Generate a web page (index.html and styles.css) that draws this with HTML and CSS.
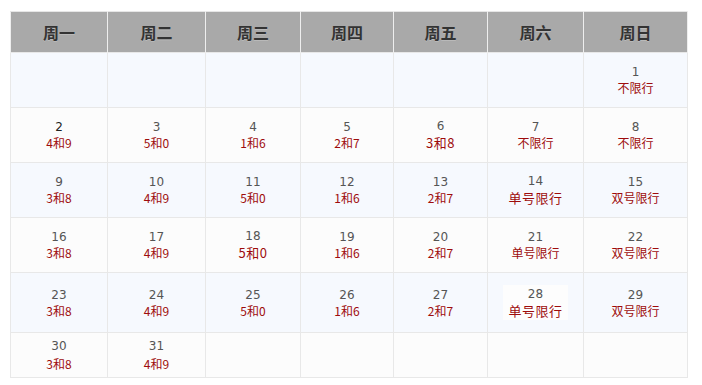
FILE: index.html
```html
<!DOCTYPE html>
<html lang="zh">
<head>
<meta charset="utf-8">
<link rel="stylesheet" href="styles.css">
</head>
<body>
<div class="wrap">
<table class="cal">
  <colgroup>
    <col class="c1"><col class="c2"><col class="c3"><col class="c4"><col class="c5"><col class="c6"><col class="c7">
  </colgroup>
  <thead>
    <tr><th>周一</th><th>周二</th><th>周三</th><th>周四</th><th>周五</th><th>周六</th><th>周日</th></tr>
  </thead>
  <tbody>
    <tr class="r1 blue">
      <td></td><td></td><td></td><td></td><td></td><td></td>
      <td><span class="n">1</span><span class="t">不限行</span></td>
    </tr>
    <tr class="r2 white">
      <td><span class="n dark">2</span><span class="t">4和9</span></td>
      <td><span class="n">3</span><span class="t">5和0</span></td>
      <td><span class="n">4</span><span class="t">1和6</span></td>
      <td><span class="n">5</span><span class="t">2和7</span></td>
      <td><span class="n">6</span><span class="t big">3和8</span></td>
      <td><span class="n">7</span><span class="t">不限行</span></td>
      <td><span class="n">8</span><span class="t">不限行</span></td>
    </tr>
    <tr class="r3 blue">
      <td><span class="n">9</span><span class="t">3和8</span></td>
      <td><span class="n">10</span><span class="t">4和9</span></td>
      <td><span class="n">11</span><span class="t">5和0</span></td>
      <td><span class="n">12</span><span class="t">1和6</span></td>
      <td><span class="n">13</span><span class="t">2和7</span></td>
      <td><span class="n">14</span><span class="t big">单号限行</span></td>
      <td><span class="n">15</span><span class="t">双号限行</span></td>
    </tr>
    <tr class="r4 white">
      <td><span class="n">16</span><span class="t">3和8</span></td>
      <td><span class="n">17</span><span class="t">4和9</span></td>
      <td><span class="n">18</span><span class="t big">5和0</span></td>
      <td><span class="n">19</span><span class="t">1和6</span></td>
      <td><span class="n">20</span><span class="t">2和7</span></td>
      <td><span class="n">21</span><span class="t">单号限行</span></td>
      <td><span class="n">22</span><span class="t">双号限行</span></td>
    </tr>
    <tr class="r5 blue">
      <td><span class="n">23</span><span class="t">3和8</span></td>
      <td><span class="n">24</span><span class="t">4和9</span></td>
      <td><span class="n">25</span><span class="t">5和0</span></td>
      <td><span class="n">26</span><span class="t">1和6</span></td>
      <td><span class="n">27</span><span class="t">2和7</span></td>
      <td><span class="box"><span class="n">28</span><span class="t big">单号限行</span></span></td>
      <td><span class="n">29</span><span class="t">双号限行</span></td>
    </tr>
    <tr class="r6 white">
      <td><span class="n">30</span><span class="t gap">3和8</span></td>
      <td><span class="n">31</span><span class="t gap">4和9</span></td>
      <td></td><td></td><td></td><td></td><td></td>
    </tr>
  </tbody>
</table>
</div>
</body>
</html>
```

FILE: styles.css
```css
html, body {
  margin: 0;
  padding: 0;
  background: #ffffff;
}

.wrap {
  padding: 11px 0 0 10px;
}

.cal {
  border-collapse: collapse;
  table-layout: fixed;
  width: 677px;
  font-family: "Noto Sans CJK SC", "DejaVu Sans", sans-serif;
  border: 1px solid #dcdcdc;
}

.c1 { width: 97px; }
.c2 { width: 98px; }
.c3 { width: 95px; }
.c4 { width: 93px; }
.c5 { width: 94px; }
.c6 { width: 96px; }
.c7 { width: 104px; }

.cal th {
  height: 40px;
  padding: 0;
  background: #a9a9a9;
  color: #333333;
  font-size: 16px;
  font-weight: bold;
  border-left: 1px solid #eeeeee;
  border-right: 1px solid #eeeeee;
  border-top: 1px solid #e6e6e6;
  text-shadow: 0 1px 0 rgba(255,255,255,0.2);
}

.cal td {
  padding: 0;
  text-align: center;
  vertical-align: middle;
  border: 1px solid #e8e8e8;
}

.r1 td, .r2 td, .r3 td, .r4 td { height: 54px; }
.r5 td { height: 59px; }
.r6 td { height: 44px; }

.blue td { background: #f6f9fe; }
.white td { background: #fcfcfc; }

.n {
  display: block;
  font-family: "DejaVu Sans", sans-serif;
  font-size: 12px;
  line-height: 16px;
  color: #555555;
}

.n.dark { color: #222222; }

.t {
  display: block;
  font-size: 12px;
  line-height: 16px;
  color: #9e0c0c;
}

.t.big {
  font-size: 13px;
  line-height: 18px;
  letter-spacing: 0.5px;
}

.t.gap {
  margin-top: 2px;
}

.box {
  display: inline-block;
  background: #fdfdfd;
  padding: 1px 5px 0;
}
```
